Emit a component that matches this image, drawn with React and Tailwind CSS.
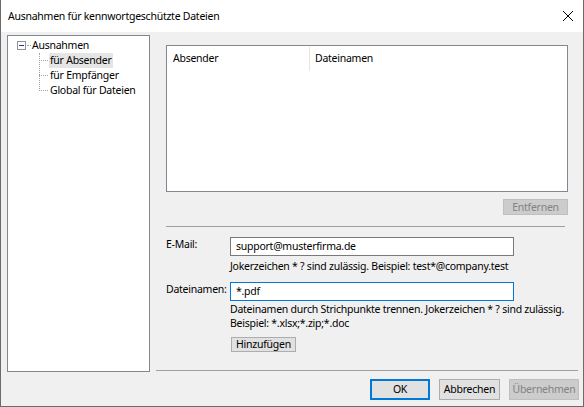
import React from "react";

const font = { fontFamily: '"Noto Sans", "Liberation Sans", sans-serif', letterSpacing: "-0.25px" };

function TreeItem({ label, selected }) {
  return (
    <div className="flex items-center h-[15px]">
      <div className="w-[9px] border-t border-dotted border-[#a0a0a0] ml-[31px] mr-[1px]" />
      <span className={"px-[1px] leading-[15px] whitespace-nowrap " + (selected ? "bg-[#e5e5e5]" : "")}>{label}</span>
    </div>
  );
}

export default function App() {
  return (
    <div
      className="w-[584px] h-[407px] bg-[#f0f0f0] border-l border-r border-b border-[#6b6b6b] flex flex-col text-[10.5px] text-black overflow-hidden"
      style={font}
    >
      <div className="h-[32px] bg-white flex items-center justify-between pl-[7px] pr-[8px] shrink-0">
        <span className="text-[10.5px] leading-[14px]">Ausnahmen für kennwortgeschützte Dateien</span>
        <svg width="12" height="12" viewBox="0 0 12 12" className="mr-[1px]">
          <path d="M1 1 L11 11 M11 1 L1 11" stroke="#000" strokeWidth="1" fill="none" />
        </svg>
      </div>
      <div className="flex pt-[3px] pl-[6px]">
        <div className="w-[143px] h-[337px] bg-white border border-[#828790] shrink-0 pt-[2px]">
          <div className="flex items-center h-[15px]">
            <div className="ml-[9px] w-[9px] h-[9px] border border-[#919191] flex items-center justify-center bg-white">
              <div className="w-[5px] h-px bg-[#1f3a93]" />
            </div>
            <div className="w-[4px] border-t border-dotted border-[#a0a0a0] mx-[1px]" />
            <span className="leading-[15px]">Ausnahmen</span>
          </div>
          <div className="relative">
            <div className="absolute left-[31px] top-0 h-[38px] border-l border-dotted border-[#a0a0a0]" />
            <TreeItem label="für Absender" selected />
            <TreeItem label="für Empfänger" />
            <TreeItem label="Global für Dateien" />
          </div>
        </div>
        <div className="flex flex-col flex-1">
          <div className="mt-[10px] ml-[16px] w-[402px] h-[147px] bg-white border border-[#828790] shrink-0">
            <div className="flex h-[25px] items-center">
              <div className="w-[143px] h-[24px] flex items-center pl-[6px] border-r border-[#e5e5e5]">Absender</div>
              <div className="pl-[5px]">Dateinamen</div>
            </div>
          </div>
          <div className="mt-[7px] ml-[353px] w-[65px] h-[16px] bg-[#cccccc] border border-[#bfbfbf] text-[#838383] flex items-center justify-center leading-none shrink-0">
            Entfernen
          </div>
          <div className="mt-[11px] ml-[16px] w-[399px] h-px bg-[#a0a0a0] shrink-0" />
          <div className="mt-[10px] flex h-[19px] shrink-0">
            <div className="ml-[16px] w-[64px] leading-[14px]">E-Mail:</div>
            <div className="w-[284px] h-[19px] bg-white border border-[#7a7a7a] flex items-center pl-[5px]">
              support@musterfirma.de
            </div>
          </div>
          <div className="ml-[80px] mt-[2px] h-[16px] leading-[16px] whitespace-nowrap">Jokerzeichen * ? sind zulässig. Beispiel: test*@company.test</div>
          <div className="mt-[8px] flex h-[19px] shrink-0">
            <div className="ml-[16px] w-[64px] leading-[14px] whitespace-nowrap">Dateinamen:</div>
            <div className="w-[284px] h-[19px] bg-white border border-[#0078d7] flex items-center pl-[5px]">*.pdf</div>
          </div>
          <div className="ml-[80px] mt-[1px] leading-[14px] whitespace-nowrap">
            <div>Dateinamen durch Strichpunkte trennen. Jokerzeichen * ? sind zulässig.</div>
            <div>Beispiel: *.xlsx;*.zip;*.doc</div>
          </div>
          <div className="mt-[7px] ml-[81px] w-[65px] h-[15px] bg-[#e1e1e1] border border-[#adadad] flex items-center justify-center leading-none shrink-0">
            Hinzufügen
          </div>
          <div className="mt-[18px] ml-[6px] w-[422px] h-px bg-[#a0a0a0] shrink-0" />
          <div className="mt-[8px] flex gap-[9px] ml-[220px] shrink-0">
            <div className="w-[60px] h-[21px] bg-[#e1e1e1] border-2 border-[#0078d7] flex items-center justify-center">OK</div>
            <div className="w-[61px] h-[21px] bg-[#e1e1e1] border border-[#adadad] flex items-center justify-center">Abbrechen</div>
            <div className="w-[70px] h-[21px] bg-[#cccccc] border border-[#bfbfbf] text-[#838383] flex items-center justify-center">Übernehmen</div>
          </div>
        </div>
      </div>
    </div>
  );
}
